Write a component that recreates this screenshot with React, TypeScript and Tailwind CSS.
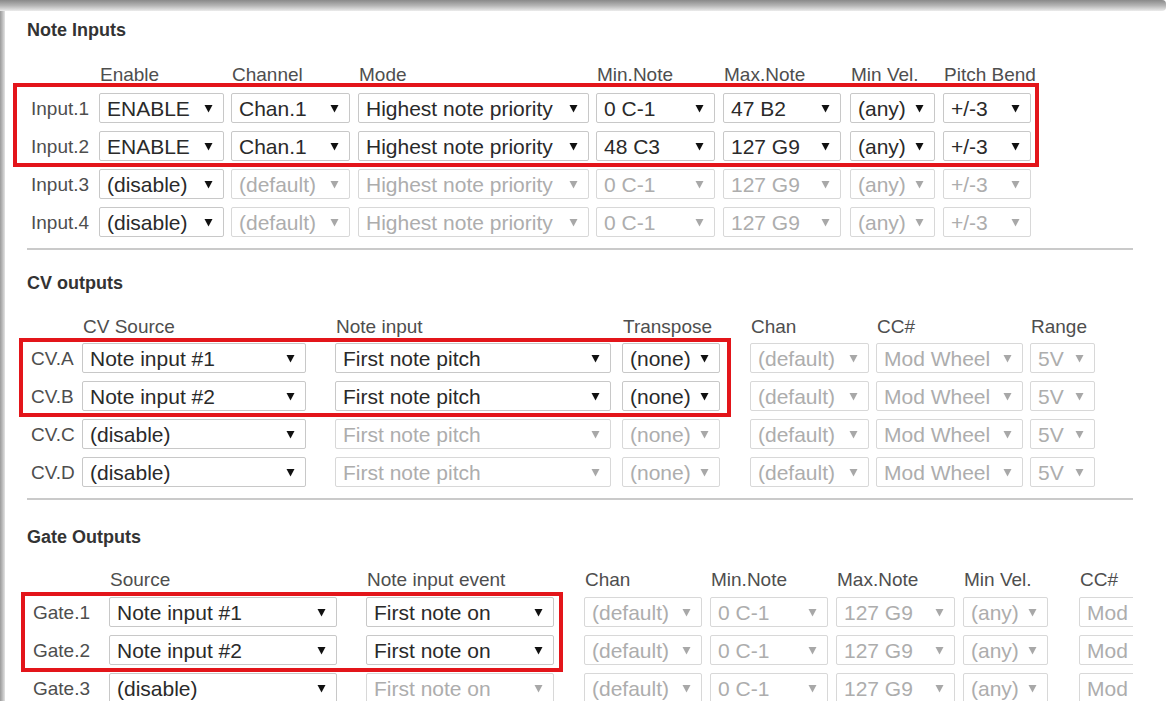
import React from "react";

// --- Column layouts (full class names, one per column) ---
type Col = { head: string; cls: string };
type Cell = { text: string; dark?: boolean };
type Row = { label: string; cells: Cell[] };

const noteCols: Col[] = [
  { head: "Enable", cls: "w-[125px] mr-[7px]" },
  { head: "Channel", cls: "w-[119px] mr-[8px]" },
  { head: "Mode", cls: "w-[231px] mr-[7px]" },
  { head: "Min.Note", cls: "w-[119px] mr-[8px]" },
  { head: "Max.Note", cls: "w-[118px] mr-[9px]" },
  { head: "Min Vel.", cls: "w-[85px] mr-[8px]" },
  { head: "Pitch Bend", cls: "w-[88px]" },
];

const cvCols: Col[] = [
  { head: "CV Source", cls: "w-[224px] mr-[29px]" },
  { head: "Note input", cls: "w-[276px] mr-[11px]" },
  { head: "Transpose", cls: "w-[98px] mr-[30px]" },
  { head: "Chan", cls: "w-[119px] mr-[7px]" },
  { head: "CC#", cls: "w-[147px] mr-[7px]" },
  { head: "Range", cls: "w-[65px]" },
];

const gateCols: Col[] = [
  { head: "Source", cls: "w-[228px] mr-[29px]" },
  { head: "Note input event", cls: "w-[188px] mr-[30px]" },
  { head: "Chan", cls: "w-[118px] mr-[8px]" },
  { head: "Min.Note", cls: "w-[118px] mr-[8px]" },
  { head: "Max.Note", cls: "w-[119px] mr-[8px]" },
  { head: "Min Vel.", cls: "w-[85px] mr-[31px]" },
  { head: "CC#", cls: "w-[120px]" },
];

const d = (text: string): Cell => ({ text, dark: true });
const g = (text: string): Cell => ({ text });

const noteRows: Row[] = [
  { label: "Input.1", cells: [d("ENABLE"), d("Chan.1"), d("Highest note priority"), d("0 C-1"), d("47 B2"), d("(any)"), d("+/-3")] },
  { label: "Input.2", cells: [d("ENABLE"), d("Chan.1"), d("Highest note priority"), d("48 C3"), d("127 G9"), d("(any)"), d("+/-3")] },
  { label: "Input.3", cells: [d("(disable)"), g("(default)"), g("Highest note priority"), g("0 C-1"), g("127 G9"), g("(any)"), g("+/-3")] },
  { label: "Input.4", cells: [d("(disable)"), g("(default)"), g("Highest note priority"), g("0 C-1"), g("127 G9"), g("(any)"), g("+/-3")] },
];

const cvRows: Row[] = [
  { label: "CV.A", cells: [d("Note input #1"), d("First note pitch"), d("(none)"), g("(default)"), g("Mod Wheel"), g("5V")] },
  { label: "CV.B", cells: [d("Note input #2"), d("First note pitch"), d("(none)"), g("(default)"), g("Mod Wheel"), g("5V")] },
  { label: "CV.C", cells: [d("(disable)"), g("First note pitch"), g("(none)"), g("(default)"), g("Mod Wheel"), g("5V")] },
  { label: "CV.D", cells: [d("(disable)"), g("First note pitch"), g("(none)"), g("(default)"), g("Mod Wheel"), g("5V")] },
];

const gateRows: Row[] = [
  { label: "Gate.1", cells: [d("Note input #1"), d("First note on"), g("(default)"), g("0 C-1"), g("127 G9"), g("(any)"), g("Mod")] },
  { label: "Gate.2", cells: [d("Note input #2"), d("First note on"), g("(default)"), g("0 C-1"), g("127 G9"), g("(any)"), g("Mod")] },
  { label: "Gate.3", cells: [d("(disable)"), g("First note on"), g("(default)"), g("0 C-1"), g("127 G9"), g("(any)"), g("Mod")] },
];

function Arrow({ dark }: { dark?: boolean }) {
  return (
    <svg width="9" height="9" viewBox="0 0 9 9" className="shrink-0">
      <path d="M0.5 1 L8.5 1 L4.5 8.5 Z" fill={dark ? "#111" : "#a8a8a8"} />
    </svg>
  );
}

function Select({ cell, cls }: { cell: Cell; cls: string }) {
  return (
    <div
      className={`${cls} h-[30px] shrink-0 flex items-center justify-between pl-[7px] pr-[10px] border rounded-[2px] bg-white text-[21px] leading-none whitespace-nowrap overflow-hidden ${
        cell.dark ? "border-[#c8c8c8] text-[#2a2a2a]" : "border-[#d8d8d8] text-[#adadad]"
      }`}
    >
      <span>{cell.text}</span>
      <Arrow dark={cell.dark} />
    </div>
  );
}

function Section({
  title,
  titleCls,
  headCls,
  rowsCls,
  labelCls,
  cols,
  rows,
  redCls,
}: {
  title: string;
  titleCls: string;
  headCls: string;
  rowsCls: string;
  labelCls: string;
  cols: Col[];
  rows: Row[];
  redCls: string;
}) {
  return (
    <section>
      <h2 className={`${titleCls} text-[18px] leading-[22px] font-bold text-[#333]`}>{title}</h2>

      {/* column headings */}
      <div className={`${headCls} flex h-[22px] text-[19px] leading-[22px] text-[#4e4e4e] whitespace-nowrap`}>
        <div className={`${labelCls} shrink-0`} />
        {cols.map((c) => (
          <div key={c.head} className={`${c.cls} shrink-0 pl-[1px]`}>
            {c.head}
          </div>
        ))}
      </div>

      {/* rows */}
      <div className={`${rowsCls} relative flex flex-col gap-[8px]`}>
        {rows.map((r) => (
          <div key={r.label} className="flex items-center">
            <div className={`${labelCls} shrink-0 text-[19px] leading-none text-[#4e4e4e] whitespace-nowrap`}>{r.label}</div>
            {r.cells.map((cell, i) => (
              <Select key={i} cell={cell} cls={cols[i].cls} />
            ))}
          </div>
        ))}
        {/* red highlight around the first two rows */}
        <div className={`${redCls} absolute border-4 border-[#e3151a] pointer-events-none`} />
      </div>
    </section>
  );
}

export default function App() {
  return (
    <div className="w-[1170px] h-[701px] overflow-hidden bg-white font-['Liberation_Sans',Arial,sans-serif]">
      <div className="h-[11px] w-[1166px] rounded-r-[4px] bg-linear-to-b from-[#8a8a8a] via-[#b4b4b4] to-[#ececec]" />
      <div className="flex">
        <div className="w-[5px] h-[690px] shrink-0 bg-linear-to-r from-[#9a9a9a] via-[#bdbdbd] to-[#e4e4e4]" />
        <div className="w-[1128px] h-[690px] shrink-0 overflow-hidden pl-[22px] pt-[8px]">
          <Section
            title="Note Inputs"
            titleCls=""
            headCls="mt-[23px]"
            rowsCls="mt-[7px]"
            labelCls="w-[72px] pl-[4px]"
            cols={noteCols}
            rows={noteRows}
            redCls="-top-[10px] -left-[14px] w-[1026px] h-[84px]"
          />
          <div className="mt-[11px] h-[2px] w-[1106px] bg-[#cacaca]" />

          <Section
            title="CV outputs"
            titleCls="mt-[22px]"
            headCls="mt-[22px]"
            rowsCls="mt-[5px]"
            labelCls="w-[55px] pl-[4px]"
            cols={cvCols}
            rows={cvRows}
            redCls="-top-[5px] -left-[8px] w-[712px] h-[79px]"
          />
          <div className="mt-[11px] h-[2px] w-[1106px] bg-[#cacaca]" />

          <Section
            title="Gate Outputs"
            titleCls="mt-[26px]"
            headCls="mt-[21px]"
            rowsCls="mt-[6px]"
            labelCls="w-[82px] pl-[6px]"
            cols={gateCols}
            rows={gateRows}
            redCls="-top-[5px] -left-[6px] w-[542px] h-[80px]"
          />
        </div>
      </div>
    </div>
  );
}
